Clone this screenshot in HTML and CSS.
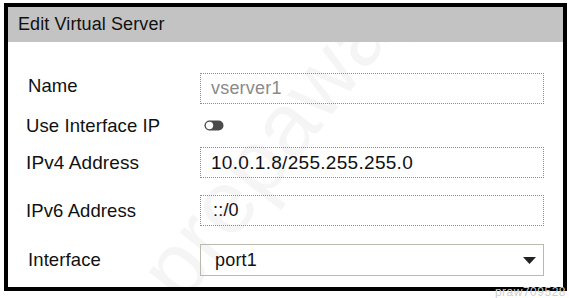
FILE: index.html
```html
<!DOCTYPE html>
<html>
<head>
<meta charset="utf-8">
<link rel="stylesheet" href="styles.css">
</head>
<body>
<div class="dialog">
  <div class="header">Edit Virtual Server</div>
  <div class="form">
    <div class="row row-name">
      <div class="label">Name</div>
      <div class="field dotted muted">vserver1</div>
    </div>
    <div class="row row-toggle">
      <div class="label">Use Interface IP</div>
      <div class="toggle-wrap">
        <svg class="toggle" width="20" height="11" viewBox="0 0 20 11">
          <rect x="0.5" y="0.5" width="19" height="10" rx="5" fill="#4a4a4a"/>
          <circle cx="5.5" cy="5.5" r="4.2" fill="#fff" stroke="#333" stroke-width="0.8"/>
        </svg>
      </div>
    </div>
    <div class="row row-ipv4">
      <div class="label big">IPv4 Address</div>
      <div class="field dotted big">10.0.1.8/255.255.255.0</div>
    </div>
    <div class="row row-ipv6">
      <div class="label">IPv6 Address</div>
      <div class="field dotted ipv6">::/0</div>
    </div>
    <div class="row row-iface">
      <div class="label">Interface</div>
      <div class="field select">
        <span>port1</span>
        <svg class="arrow" width="13" height="7" viewBox="0 0 13 7"><path d="M0 0H13L6.5 7Z" fill="#222"/></svg>
      </div>
    </div>
  </div>
  <div class="watermark">prepaway</div>
</div>
<div class="tag">praw709528</div>
</body>
</html>
```
FILE: styles.css
```css
html, body {
  margin: 0;
  padding: 0;
  background: #fff;
}
body {
  width: 569px;
  height: 298px;
  position: relative;
  overflow: hidden;
  font-family: "Liberation Sans", Arial, sans-serif;
  color: #111;
}
.dialog {
  position: relative;
  margin: 3px 0 0 4px;
  width: 563px;
  height: 288px;
  box-sizing: border-box;
  border: 4px solid #000;
  overflow: hidden;
}
.header {
  height: 35px;
  background: #c3c3c3;
  font-size: 18px;
  letter-spacing: 0.1px;
  line-height: 35px;
  padding-left: 10px;
  color: #111;
  position: relative;
  z-index: 1;
}
.form {
  display: flex;
  flex-direction: column;
  padding-top: 31px;
  position: relative;
  z-index: 1;
}
.row {
  display: flex;
  align-items: center;
  height: 31px;
}
.row-name { height: 31px; }
.row-toggle { height: 43px; }
.row-ipv4 { height: 31px; }
.row-ipv6 { height: 31px; margin-top: 17px; }
.row-iface { height: 32px; margin-top: 18px; }
.label {
  width: 192px;
  padding-left: 18px;
  box-sizing: border-box;
  font-size: 18.5px;
  letter-spacing: 0.1px;
  flex: none;
}
.row-name .label { padding-left: 20px; margin-top: -6px; }
.row-iface .label { padding-left: 20px; }
.label.big { font-size: 19px; }
.field {
  width: 344px;
  height: 100%;
  box-sizing: border-box;
  display: flex;
  align-items: center;
  padding-left: 10px;
  font-size: 18px;
  letter-spacing: 0.2px;
  background: transparent;
}
.dotted {
  border: 1px dotted #8c8c8c;
}
.muted { color: #8a8a8a; }
.field.big { font-size: 19px; letter-spacing: 0.3px; }
.ipv6 { padding-left: 12px; }
.select {
  border: 1px solid #b9b9ad;
  padding-left: 14px;
  padding-right: 7px;
  justify-content: space-between;
}
.toggle-wrap {
  padding-left: 4px;
  display: flex;
  align-items: center;
}
.toggle { display: block; }
.arrow { display: block; }
.watermark {
  position: absolute;
  left: 150px;
  top: 235px;
  font-size: 90px;
  line-height: 90px;
  font-family: "Liberation Sans", Arial, sans-serif;
  color: rgba(0, 0, 0, 0.04);
  transform: rotate(-52deg);
  transform-origin: left center;
  white-space: nowrap;
  z-index: 0;
  pointer-events: none;
}
.tag {
  position: absolute;
  right: 3px;
  bottom: 0;
  font-size: 12px;
  line-height: 12px;
  color: #d0d0d0;
  letter-spacing: 0.5px;
}
```
